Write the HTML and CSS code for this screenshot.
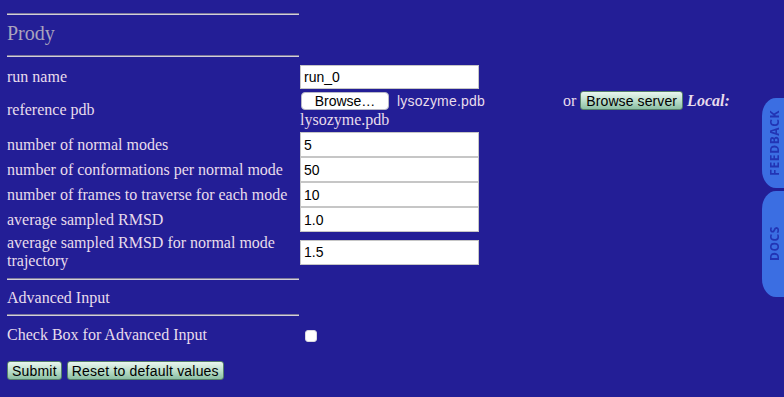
FILE: index.html
```html
<!DOCTYPE html>
<html lang="en">
<head>
    <meta charset="UTF-8">
    <title>Prody</title>
    <link rel="stylesheet" href="styles.css">
</head>
<body>

    <!-- Section header -->
    <hr class="rule rule-top">
    <h2 class="title">Prody</h2>
    <hr class="rule">

    <form class="params">
        <div class="row row-first">
            <label class="lbl">run name</label>
            <input class="txt txt-first" type="text" value="run_0">
        </div>
        <div class="row row-pdb">
            <label class="lbl">reference pdb</label>
            <div class="field">
                <div class="upload">
                    <span class="file"><span class="file-btn">Browse…</span><span class="file-name">lysozyme.pdb</span></span>
                    <span class="or">or</span>
                    <button type="button" class="btn">Browse server</button>
                    <b class="local">Local:</b>
                </div>
                <div class="local-name">lysozyme.pdb</div>
            </div>
        </div>
        <div class="row row-gap">
            <label class="lbl">number of normal modes</label>
            <input class="txt" type="text" value="5">
        </div>
        <div class="row">
            <label class="lbl">number of conformations per normal mode</label>
            <input class="txt" type="text" value="50">
        </div>
        <div class="row">
            <label class="lbl">number of frames to traverse for each mode</label>
            <input class="txt" type="text" value="10">
        </div>
        <div class="row">
            <label class="lbl">average sampled RMSD</label>
            <input class="txt" type="text" value="1.0">
        </div>
        <div class="row row-rmsd">
            <label class="lbl">average sampled RMSD for normal mode trajectory</label>
            <input class="txt" type="text" value="1.5">
        </div>

        <hr class="rule rule-adv">
        <div class="adv-title">Advanced Input</div>
        <hr class="rule rule-mid">

        <div class="row row-check">
            <label class="lbl">Check Box for Advanced Input</label>
            <input class="check" type="checkbox">
        </div>

        <div class="actions">
            <button type="button" class="btn">Submit</button>
            <button type="button" class="btn">Reset to default values</button>
        </div>
    </form>

    <!-- Side tabs -->
    <div class="side-tabs">
        <a class="tab tab-feedback" href="#"><span>FEEDBACK</span></a>
        <a class="tab tab-docs" href="#"><span>DOCS</span></a>
    </div>

</body>
</html>
```

FILE: styles.css
```css
body {
    margin: 0;
    padding: 0 7px;
    background-color: #231e96;
    color: #e8dcec;
    font-family: "Liberation Serif", "Times New Roman", serif;
    font-size: 16px;
    line-height: 18px;
}
.rule {
    width: 292px;
    height: 0;
    margin: 0;
    border: 0;
    border-top: 1px solid #7f7b9c;
    border-bottom: 1px solid #d2cedb;
}
.rule-top {
    margin-top: 13px;
}
.title {
    margin: 7px 0 10px;
    font-size: 20px;
    line-height: 23px;
    font-weight: normal;
    color: #aaa3bd;
}
.params {
    margin-top: 8px;
}
.row {
    display: flex;
    align-items: center;
}
.lbl {
    width: 293px;
    flex-shrink: 0;
}
.row-pdb {
    margin-top: 2px;
}
.row-gap {
    margin-top: 3px;
}
.row-rmsd {
    margin-top: 2px;
}
.row-rmsd .lbl {
    width: 280px;
    margin-right: 13px;
}
.txt {
    box-sizing: border-box;
    width: 179px;
    height: 25px;
    margin: 0;
    padding: 0 3px;
    border: 1px solid #c6c6c6;
    background: white;
    color: black;
    font-family: "Liberation Sans", Arial, sans-serif;
    font-size: 14px;
}
.txt-first {
    height: 24px;
}
.upload {
    height: 19px;
    display: flex;
    align-items: center;
    white-space: nowrap;
}
.file {
    display: inline-flex;
    align-items: center;
    width: 259px;
    margin-left: 1px;
}
.file-btn {
    box-sizing: border-box;
    width: 88px;
    height: 18px;
    line-height: 16px;
    border: 1px solid #b8b8c8;
    border-radius: 4px;
    background: white;
    color: black;
    text-align: center;
    font-family: "Liberation Sans", Arial, sans-serif;
    font-size: 14px;
}
.file-name {
    margin-left: 8px;
    font-family: "Liberation Sans", Arial, sans-serif;
    font-size: 14px;
    letter-spacing: 0.2px;
}
.or {
    margin: 0 4px 0 3px;
}
.local {
    margin-left: 4px;
    font-style: italic;
}
.local-name {
    margin-top: 1px;
}
.btn {
    height: 19px;
    margin: 0;
    padding: 0 4px;
    border: 1px solid #56806a;
    border-radius: 3px;
    background: linear-gradient(#eaf6ef, #b8dcc8 55%, #8cbfa4);
    color: black;
    font-family: "Liberation Sans", Arial, sans-serif;
    font-size: 14px;
    line-height: 16px;
    letter-spacing: 0.2px;
}
.upload .btn {
    padding: 0 5px;
    letter-spacing: 0.1px;
}
.rule-adv {
    margin-top: 8px;
}
.adv-title {
    margin-top: 9px;
}
.rule-mid {
    margin-top: 7px;
}
.row-check {
    margin-top: 10px;
}
.check {
    appearance: none;
    box-sizing: border-box;
    width: 12px;
    height: 12px;
    margin: 1px 0 0 5px;
    border: 1px solid #d8d8e0;
    border-radius: 3px;
    background: white;
}
.actions {
    margin-top: 17px;
    display: flex;
    gap: 5px;
}
.side-tabs {
    position: fixed;
    top: 98px;
    right: 0;
    display: flex;
    flex-direction: column;
    gap: 3px;
}
.tab {
    width: 22px;
    display: flex;
    align-items: center;
    justify-content: center;
    background-color: #3b6ee2;
    border-radius: 14px 0 0 14px / 18px 0 0 18px;
    color: #2234b4;
    text-decoration: none;
    font-family: "Open Sans", "DejaVu Sans", sans-serif;
    font-size: 12px;
    font-weight: bold;
    letter-spacing: 0.6px;
}
.tab span {
    writing-mode: vertical-rl;
    transform: rotate(180deg);
    margin-left: 3px;
}
.tab-feedback {
    height: 90px;
}
.tab-docs {
    height: 106px;
}
```
